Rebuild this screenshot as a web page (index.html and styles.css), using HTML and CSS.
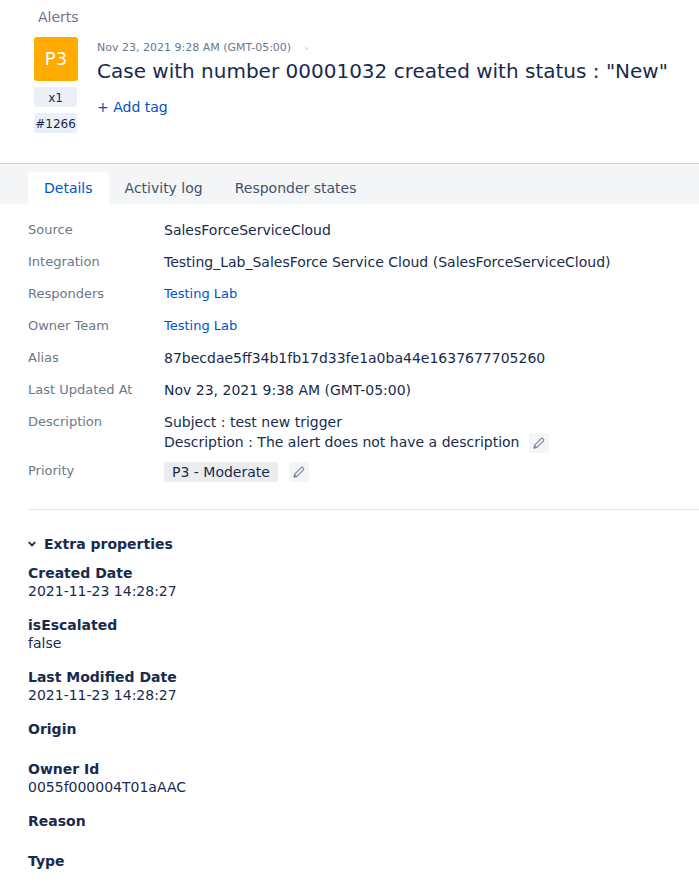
FILE: index.html
```html
<!DOCTYPE html>
<html lang="en">
<head>
<meta charset="utf-8">
<title>Alerts</title>
<link rel="stylesheet" href="styles.css">
</head>
<body>
<header class="header">
  <div class="crumb">Alerts</div>
  <div class="summary">
    <div class="badges">
      <div class="priority-badge">P3</div>
      <div class="chip">x1</div>
      <div class="chip">#1266</div>
    </div>
    <div class="summary-main">
      <div class="meta"><span>Nov 23, 2021 9:28 AM (GMT-05:00)</span><span class="dot"></span></div>
      <h1 class="title">Case with number 00001032 created with status : "New"</h1>
      <a class="add-tag">+ Add tag</a>
    </div>
  </div>
</header>
<nav class="tabs">
  <div class="tab active">Details</div>
  <div class="tab">Activity log</div>
  <div class="tab">Responder states</div>
</nav>
<main class="content">
  <dl class="details">
    <div class="row"><dt>Source</dt><dd>SalesForceServiceCloud</dd></div>
    <div class="row"><dt>Integration</dt><dd>Testing_Lab_SalesForce Service Cloud (SalesForceServiceCloud)</dd></div>
    <div class="row"><dt>Responders</dt><dd class="link">Testing Lab</dd></div>
    <div class="row"><dt>Owner Team</dt><dd class="link">Testing Lab</dd></div>
    <div class="row"><dt>Alias</dt><dd>87becdae5ff34b1fb17d33fe1a0ba44e1637677705260</dd></div>
    <div class="row"><dt>Last Updated At</dt><dd>Nov 23, 2021 9:38 AM (GMT-05:00)</dd></div>
    <div class="row row-desc"><dt>Description</dt><dd>Subject : test new trigger<br>Description : The alert does not have a description<button class="edit edit-desc"><svg viewBox="0 0 12 12" width="14" height="14"><path d="M1.6 10.4l.7-2.6 5.6-5.6a1 1 0 0 1 1.4 0l.5.5a1 1 0 0 1 0 1.4L4.2 9.7z" fill="none" stroke="#7a869a" stroke-width="1" stroke-linejoin="round"/><path d="M1.6 10.4l.7-2.6 1.9 1.9z" fill="#7a869a"/></svg></button></dd></div>
    <div class="row row-priority"><dt>Priority</dt><dd class="priority-value"><span class="lozenge">P3 - Moderate</span><button class="edit"><svg viewBox="0 0 12 12" width="14" height="14"><path d="M1.6 10.4l.7-2.6 5.6-5.6a1 1 0 0 1 1.4 0l.5.5a1 1 0 0 1 0 1.4L4.2 9.7z" fill="none" stroke="#7a869a" stroke-width="1" stroke-linejoin="round"/><path d="M1.6 10.4l.7-2.6 1.9 1.9z" fill="#7a869a"/></svg></button></dd></div>
  </dl>
  <hr class="divider">
  <section class="extra">
    <h2 class="extra-head"><svg viewBox="0 0 8 6" width="8" height="6"><path d="M.8 1.2l3.2 3.2 3.2-3.2" fill="none" stroke="#172b4d" stroke-width="1.9"/></svg>Extra properties</h2>
    <div class="prop"><div class="prop-name">Created Date</div><div class="prop-value">2021-11-23 14:28:27</div></div>
    <div class="prop"><div class="prop-name">isEscalated</div><div class="prop-value">false</div></div>
    <div class="prop"><div class="prop-name">Last Modified Date</div><div class="prop-value">2021-11-23 14:28:27</div></div>
    <div class="prop prop-empty"><div class="prop-name">Origin</div></div>
    <div class="prop"><div class="prop-name">Owner Id</div><div class="prop-value">0055f000004T01aAAC</div></div>
    <div class="prop prop-empty"><div class="prop-name">Reason</div></div>
    <div class="prop prop-empty"><div class="prop-name">Type</div></div>
  </section>
</main>
</body>
</html>
```

FILE: styles.css
```css
* { box-sizing: border-box; }
html, body { height: 100%; }
body {
  margin: 0;
  height: 886px;
  overflow: hidden;
  background: #fff;
  color: #172b4d;
  font-family: "DejaVu Sans", sans-serif;
  font-size: 14px;
  line-height: 20px;
}
.header { height: 163px; padding-top: 7px; }
.crumb { padding-left: 38px; color: #6b778c; height: 20px; }
.summary { display: flex; padding: 10px 0 0 34px; }
.badges { width: 44px; display: flex; flex-direction: column; gap: 6px; margin-right: 19px; }
.priority-badge {
  width: 44px; height: 44px; background: #ffab00; color: #fff;
  border-radius: 3px; font-size: 18px; display: flex; align-items: center; justify-content: center;
}
.chip {
  width: 43px; height: 20px; background: #ebf0f7; border-radius: 3px;
  font-size: 12px; text-align: center; line-height: 22px; white-space: nowrap;
}
.summary-main { display: flex; flex-direction: column; align-items: flex-start; }
.meta { display: flex; align-items: center; font-size: 11px; line-height: 14px; color: #6b778c; margin-top: 4px; }
.dot { width: 3px; height: 3px; border-radius: 50%; background: #dfe1e6; margin-left: 14px; }
.title { margin: 2px 0 0; font-size: 20px; font-weight: 400; line-height: 28px; white-space: nowrap; }
.add-tag { margin-top: 12px; color: #0052cc; }
.tabs {
  height: 41px; display: flex; padding: 8px 0 0 28px; background: #f4f5f7; border-top: 1px solid #d0d3da;
}
.tab { padding: 6px 16px; height: 32px; color: #42526e; }
.tab.active { background: #fff; color: #0052cc; border-radius: 3px 3px 0 0; }
.content { padding: 10px 0 0 28px; }
.details { margin: 0; }
.row { display: flex; min-height: 32px; padding-top: 6px; }
.row dt { width: 136px; flex: none; color: #6b778c; font-size: 13px; }
.row dd { margin: 0; white-space: nowrap; }
.row dd.link { color: #0052cc; font-size: 13px; }
.row-desc { height: 48px; }
.row-priority { height: 40px; }
.row-priority dt { padding-top: 1px; }
.row dd.priority-value { display: flex; align-items: center; height: 20px; margin-top: 2px; }
.lozenge { background: #ebecf0; border-radius: 3px; padding: 0 8px; height: 20px; }
.edit {
  width: 20px; height: 20px; padding: 0; border: 0; border-radius: 3px; background: #f4f5f7;
  display: inline-flex; align-items: center; justify-content: center;
}
.row-priority .edit { margin-left: 11px; }
.edit-desc { margin-left: 10px; vertical-align: top; margin-top: 1px; }
.divider { margin: 15px 0 0; border: 0; border-top: 1px solid #e4e5e8; }
.extra { padding-top: 24px; }
.extra-head { margin: 0 0 10px; font-size: 14px; font-weight: 700; line-height: 20px; display: flex; align-items: center; gap: 8px; }
.prop { height: 52px; }
.prop-name { font-weight: 700; line-height: 18px; }
.prop-value { line-height: 18px; }
.prop.prop-empty { height: 40px; }
```
